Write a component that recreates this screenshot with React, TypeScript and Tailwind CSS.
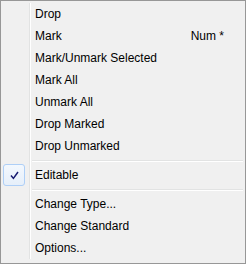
import React from 'react';

type Item =
  | { kind: 'item'; label: string; shortcut?: string; checked?: boolean }
  | { kind: 'sep' };

const items: Item[] = [
  { kind: 'item', label: 'Drop' },
  { kind: 'item', label: 'Mark', shortcut: 'Num *' },
  { kind: 'item', label: 'Mark/Unmark Selected' },
  { kind: 'item', label: 'Mark All' },
  { kind: 'item', label: 'Unmark All' },
  { kind: 'item', label: 'Drop Marked' },
  { kind: 'item', label: 'Drop Unmarked' },
  { kind: 'sep' },
  { kind: 'item', label: 'Editable', checked: true },
  { kind: 'sep' },
  { kind: 'item', label: 'Change Type...' },
  { kind: 'item', label: 'Change Standard' },
  { kind: 'item', label: 'Options...' },
];

function CheckBox() {
  return (
    <div className="w-[22px] h-[22px] rounded-[3px] border border-[#aecff7] bg-gradient-to-b from-[#f3f8fe] to-[#e6effa] flex items-center justify-center">
      <svg width="9" height="9" viewBox="0 0 9 9">
        <path d="M1 4.6 L3.4 7.4 L8 1" fill="none" stroke="#161a70" strokeWidth="1.5" />
      </svg>
    </div>
  );
}

export default function App() {
  return (
    <div
      className="w-[246px] h-[264px] border border-[#979797] bg-[#f0f0f0] p-[2px] text-[12px] text-black"
      style={{ fontFamily: '"Liberation Sans", Arial, sans-serif' }}
    >
      {items.map((it, i) =>
        it.kind === 'sep' ? (
          <div key={i} className="flex h-[7px]">
            <div className="w-[26px] shrink-0" />
            <div className="flex-1 border-l border-[#e2e3e3] shadow-[inset_1px_0_0_#ffffff] pt-[3px] pl-[2px]">
              <div className="h-[1px] bg-[#e2e3e3] shadow-[0_1px_0_#ffffff]" />
            </div>
          </div>
        ) : (
          <div key={i} className="flex h-[22px]">
            <div className="w-[26px] shrink-0 flex items-center">
              {it.checked && <CheckBox />}
            </div>
            <div className="flex-1 flex items-center justify-between border-l border-[#e2e3e3] shadow-[inset_1px_0_0_#ffffff] pl-[5px] pr-[19px]">
              <span>{it.label}</span>
              {it.shortcut && <span>{it.shortcut}</span>}
            </div>
          </div>
        )
      )}
    </div>
  );
}
